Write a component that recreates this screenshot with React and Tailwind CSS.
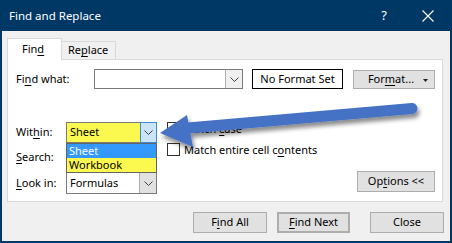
import React from "react";

const U = ({ children }) => (
  <span className="underline decoration-1 underline-offset-[2px]">{children}</span>
);

const Chevron = () => (
  <svg width="9" height="5" viewBox="0 0 9 5">
    <path d="M0.5 0.5 L4.5 4.5 L8.5 0.5" stroke="#404040" strokeWidth="1" fill="none" />
  </svg>
);

const Button = ({ children, className = "" }) => (
  <div
    className={
      "flex items-center justify-center bg-[#e1e1e1] border border-[#adadad] text-black " +
      className
    }
  >
    {children}
  </div>
);

const Checkbox = ({ children }) => (
  <div className="flex items-center h-[13px]">
    <div className="w-[13px] h-[13px] border border-[#333] bg-white" />
    <span className="ml-[4px] leading-none">{children}</span>
  </div>
);

const Arrow = () => (
  <svg
    className="absolute left-0 top-0 pointer-events-none"
    width="452"
    height="243"
    viewBox="0 0 452 243"
  >
    <defs>
      <filter id="shadow" x="-10%" y="-30%" width="120%" height="180%">
        <feDropShadow dx="2" dy="4" stdDeviation="2.2" floodColor="#000" floodOpacity="0.45" />
      </filter>
    </defs>
    <g filter="url(#shadow)" fill="#4472c4">
      <line
        x1="186"
        y1="128"
        x2="410"
        y2="108.5"
        stroke="#4472c4"
        strokeWidth="11"
        strokeLinecap="round"
      />
      <polygon points="158,133 185,115 191,147" />
    </g>
  </svg>
);

export default function App() {
  return (
    <div
      className="relative w-[452px] h-[243px] overflow-hidden bg-[#f0f0f0] border-x-2 border-b-2 border-[#003865] text-[11px] text-black"
      style={{ fontFamily: '"Noto Sans", "Open Sans", sans-serif' }}
    >
      {/* title bar */}
      <div className="h-[31px] bg-[#003865] flex items-center text-white pl-[7px] pr-[16px]">
        <span className="text-[11.5px]">Find and Replace</span>
        <span className="ml-auto text-[13px] mr-[35px]">?</span>
        <svg width="12" height="12" viewBox="0 0 12 12">
          <path d="M0.5 0.5 L11.5 11.5 M11.5 0.5 L0.5 11.5" stroke="#fff" strokeWidth="1.1" />
        </svg>
      </div>

      {/* tabs */}
      <div className="flex items-end h-[21px] mt-[7px] ml-[5px]">
        <div className="relative z-10 -mb-px w-[55px] h-[22px] bg-white border border-b-0 border-[#d9d9d9] flex items-center pl-[14px]">
          Fin<U>d</U>
        </div>
        <div className="w-[54px] h-[18px] bg-[#f0f0f0] border border-l-0 border-b-0 border-[#d9d9d9] flex items-center pl-[6px]">
          Re<U>p</U>lace
        </div>
      </div>

      {/* panel */}
      <div className="ml-[5px] w-[436px] h-[143px] bg-white border border-[#d9d9d9] pl-[8px] pr-[7px] pt-[9px]">
        <div className="flex items-center h-[20px]">
          <div className="w-[78px]">
            Fi<U>n</U>d what:
          </div>
          <div className="flex w-[149px] h-[20px] border border-[#7a7a7a] bg-white">
            <div className="flex-1" />
            <div className="w-[17px] flex items-center justify-center bg-[#f0f0f0] border-l border-[#adadad]">
              <Chevron />
            </div>
          </div>
          <div className="ml-[9px] w-[91px] h-[20px] border border-black flex items-center justify-center">
            No Format Set
          </div>
          <Button className="ml-[10px] w-[82px] h-[19px] relative">
            <span className="mr-[6px]">
              For<U>m</U>at...
            </span>
            <svg className="absolute right-[6px] top-[8px]" width="5" height="3" viewBox="0 0 5 3">
              <path d="M0 0 L5 0 L2.5 3 Z" fill="#222" />
            </svg>
          </Button>
        </div>

        <div className="flex items-end mt-[33px]">
          <div className="flex flex-col gap-[4px]">
            <div className="flex items-center h-[21px]">
              <div className="w-[50px]">
                Wit<U>h</U>in:
              </div>
              <div className="relative flex w-[91px] h-[21px] border border-[#7a7a7a] bg-[#fbf94f]">
                <div className="flex-1 flex items-center pl-[3px]">Sheet</div>
                <div className="w-[17px] -my-px -mr-px flex items-center justify-center bg-[#cce4f7] border border-[#3c8be0]">
                  <Chevron />
                </div>
                <div className="absolute left-[-1px] top-[20px] w-[91px] h-[30px] border border-[#646464] bg-[#fbf94f] z-20 flex flex-col leading-[14px]">
                  <div className="h-[14px] bg-[#3399ff] text-white pl-[2px]">Sheet</div>
                  <div className="h-[14px] pl-[2px]">Workbook</div>
                </div>
              </div>
            </div>
            <div className="flex items-center h-[21px]">
              <div className="w-[50px]">
                <U>S</U>earch:
              </div>
            </div>
            <div className="flex items-center h-[22px]">
              <div className="w-[50px]">
                <U>L</U>ook in:
              </div>
              <div className="flex w-[91px] h-[22px] border border-[#7a7a7a] bg-white">
                <div className="flex-1 flex items-center pl-[3px]">Formulas</div>
                <div className="w-[17px] flex items-center justify-center bg-[#e1e1e1] border-l border-[#adadad]">
                  <Chevron />
                </div>
              </div>
            </div>
          </div>

          <div className="self-start ml-[10px] flex flex-col gap-[8px]">
            <Checkbox>
              Match <U>c</U>ase
            </Checkbox>
            <Checkbox>
              Match entire cell c<U>o</U>ntents
            </Checkbox>
          </div>

          <Button className="ml-auto mb-[2px] w-[78px] h-[21px]">
            Op<U>t</U>ions &lt;&lt;
          </Button>
        </div>
      </div>

      {/* bottom buttons */}
      <div className="flex justify-end mt-[10px] pr-[6px]">
        <Button className="w-[74px] h-[21px]">
          F<U>i</U>nd All
        </Button>
        <Button className="ml-[10px] w-[73px] h-[21px] border-2 border-[#0078d7]">
          <U>F</U>ind Next
        </Button>
        <Button className="ml-[20px] w-[74px] h-[21px]">Close</Button>
      </div>

      <Arrow />
    </div>
  );
}
